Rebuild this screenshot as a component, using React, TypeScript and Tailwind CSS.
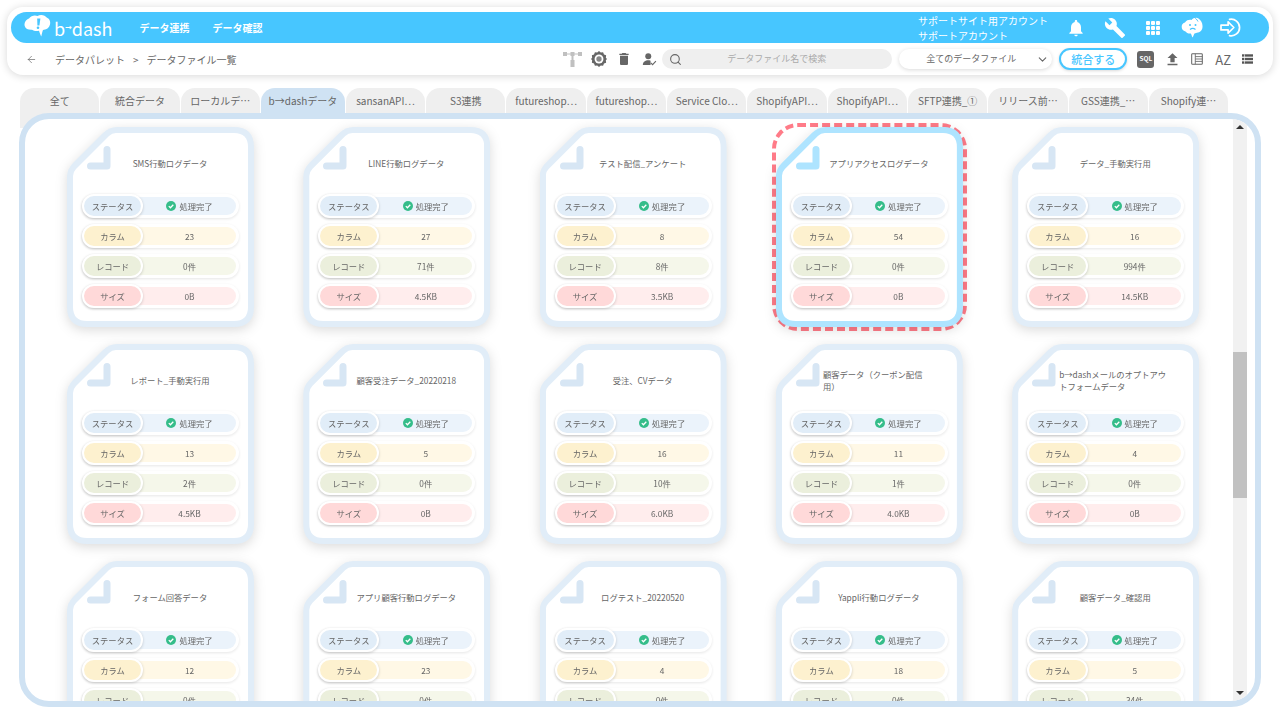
import React from 'react';
import { ArrowLeft, ChevronDown, Search } from 'lucide-react';
import { MdNotifications, MdBuild, MdDelete, MdFileUpload } from 'react-icons/md';
import { BsGrid3X3GapFill } from 'react-icons/bs';

const tabs = [
  '全て', '統合データ', 'ローカルデ⋯', 'b→dashデータ', 'sansanAPI⋯', 'S3連携', 'futureshop⋯', 'futureshop⋯',
  'Service Clo⋯', 'ShopifyAPI⋯', 'ShopifyAPI⋯', 'SFTP連携_①', 'リリース前⋯', 'GSS連携_⋯', 'Shopify連⋯',
];

const files = [
  { name: 'SMS行動ログデータ', columns: '23', records: '0件', size: '0B' },
  { name: 'LINE行動ログデータ', columns: '27', records: '71件', size: '4.5KB' },
  { name: 'テスト配信_アンケート', columns: '8', records: '8件', size: '3.5KB' },
  { name: 'アプリアクセスログデータ', columns: '54', records: '0件', size: '0B', selected: true },
  { name: 'データ_手動実行用', columns: '16', records: '994件', size: '14.5KB' },
  { name: 'レポート_手動実行用', columns: '13', records: '2件', size: '4.5KB' },
  { name: '顧客受注データ_20220218', columns: '5', records: '0件', size: '0B' },
  { name: '受注、CVデータ', columns: '16', records: '10件', size: '6.0KB' },
  { name: '顧客データ（クーポン配信用）', columns: '11', records: '1件', size: '4.0KB' },
  { name: 'b→dashメールのオプトアウトフォームデータ', columns: '4', records: '0件', size: '0B' },
  { name: 'フォーム回答データ', columns: '12', records: '0件', size: '0B' },
  { name: 'アプリ顧客行動ログデータ', columns: '23', records: '0件', size: '0B' },
  { name: 'ログテスト_20220520', columns: '4', records: '0件', size: '0B' },
  { name: 'Yappli行動ログデータ', columns: '18', records: '0件', size: '0B' },
  { name: '顧客データ_確認用', columns: '5', records: '34件', size: '0B' },
];

function LogoMark() {
  return (
    <svg width="27" height="27" viewBox="0 0 27 27">
      <path
        d="M5 4.500C7 1.500 11 .8 13.500 2c3-2 7.500-1.200 9.500 1.800 2.500 1 3.800 4 3 6.700-.6 3-3.200 5-6 5.300l-1 .3c-.5 1.200-1 3.400-1.700 6.400-.9-1.500-1.700-4-2.300-5.800-2.500.7-5.200.3-7-.9C4.500 16 1.500 15 .7 12 0 9 1.800 5.500 5 4.500Z"
        fill="#fff"
      />
      <path d="M13.200 4.500h3.200l-1 7h-2Z" fill="#47c6ff" />
      <circle cx="14" cy="13.800" r="1.300" fill="#47c6ff" />
    </svg>
  );
}

function FaceCloudIcon() {
  return (
    <svg width="22" height="24" viewBox="0 0 22 24">
      <path
        d="M4 6.500C5.500 4 8.500 3.500 10.500 4c1.500-2 5-3 7-1.500C20 4 21.500 7 21.500 10c.3 3-1.500 6-4.500 6.500-1.500.4-2.500.5-3.500 1-.6 1-1 2.500-2 4-.8-1.500-1-3-1.800-4-2.500.2-4.200-.6-5.200-2C2 15 .5 13 .7 10.500.8 8.500 2 7 4 6.500Z"
        fill="#fff"
      />
      <circle cx="9" cy="9" r="1" fill="#47c6ff" />
      <circle cx="14.500" cy="9" r="1" fill="#47c6ff" />
      <path d="M9 13.500c1.500-1.200 4-1.200 5.500 0" stroke="#47c6ff" strokeWidth="1.200" fill="none" />
      <path d="M13 1c1.500 1 3 2.500 4 4.500" stroke="#47c6ff" strokeWidth="1" fill="none" />
    </svg>
  );
}

function SignInIcon() {
  return (
    <svg width="21" height="19" viewBox="0 0 22 20" fill="none" stroke="#fff" strokeWidth="1.800">
      <path d="M1 7.500h7.500V4l6 6-6 6v-3.500H1Z" strokeLinejoin="round" />
      <path d="M10 1.500a8.700 8.700 0 1 1 0 17" strokeLinecap="round" />
    </svg>
  );
}

function NetworkIcon() {
  return (
    <svg width="19" height="18" viewBox="0 0 19 18" fill="#c0c0c0">
      <rect x="0" y="2" width="4" height="4" />
      <rect x="7.500" y="2" width="4" height="4" />
      <rect x="15" y="2" width="4" height="4" />
      <rect x="4" y="3.500" width="11" height="1" />
      <rect x="8.500" y="6" width="2" height="4" />
      <rect x="7.500" y="10" width="4" height="7" />
    </svg>
  );
}

function GearIcon() {
  return (
    <svg width="16" height="16" viewBox="0 0 18 18">
      <path d="M9 0l2 1.800 2.600-.5 1 2.500 2.400 1-.3 2.700L18 9l-1.300 1.500.3 2.700-2.400 1-1 2.500-2.600-.5L9 18l-2-1.800-2.600.5-1-2.500-2.400-1 .3-2.700L0 9l1.300-1.500L1 4.800l2.400-1 1-2.500 2.600.5Z" fill="#666" />
      <circle cx="9" cy="9" r="5" fill="#fff" />
      <circle cx="9" cy="9" r="3" fill="#888" />
    </svg>
  );
}

function UserCheckIcon() {
  return (
    <svg width="15" height="15" viewBox="0 0 18 18" fill="#666">
      <circle cx="7.500" cy="5" r="3.600" />
      <path d="M1 15.500c0-3.500 3-5.500 6.500-5.500 1 0 2 .2 2.800.5v5Z" />
      <path d="M10.500 13l2.200 2.200 4-4.200" stroke="#666" strokeWidth="1.300" fill="none" />
    </svg>
  );
}

function TableIcon() {
  return (
    <svg width="12" height="12" viewBox="0 0 14 14" fill="none" stroke="#666" strokeWidth="1.200">
      <rect x=".8" y=".8" width="12.400" height="12.400" rx="1" />
      <path d="M5 1v12M5 4.200h8M5 7h8M5 9.800h8" strokeWidth="1" />
    </svg>
  );
}

function ListIcon() {
  return (
    <svg width="11" height="10" viewBox="0 0 14 12" fill="#555">
      <rect x="0" y="0" width="14" height="3" />
      <rect x="0" y="4.500" width="14" height="3" />
      <rect x="0" y="9" width="14" height="3" />
      <rect x="3" y="0" width=".8" height="12" fill="#fff" />
    </svg>
  );
}

function CheckBadge() {
  return (
    <svg width="10" height="10" viewBox="0 0 10 10">
      <circle cx="5" cy="5" r="5" fill="#35bd8a" />
      <path d="M2.800 5.100l1.600 1.600 2.900-3" stroke="#fff" strokeWidth="1.300" fill="none" />
    </svg>
  );
}

function InfoRow({ label, labelBg, valueBg, children }: { label: string; labelBg: string; valueBg: string; children: React.ReactNode }) {
  return (
    <div className="flex h-[24px] rounded-full bg-white shadow-[0_1px_3px_rgba(0,0,0,0.1)]">
      <div className={`relative z-10 flex w-[61px] shrink-0 items-center justify-center rounded-full border-2 border-white shadow-[0_1px_3px_rgba(0,0,0,0.18)] ${labelBg}`}>
        {label}
      </div>
      <div className={`my-[3px] mr-[3px] -ml-[30px] flex flex-1 items-center justify-center gap-[3px] rounded-r-full pl-[30px] ${valueBg}`}>
        {children}
      </div>
    </div>
  );
}

function FileCard({ file }: { file: (typeof files)[number] }) {
  return (
    <div className="relative h-[200px] w-[187px]">
      {file.selected && (
        <div className="absolute -inset-[4px] rounded-[26px] border-[4px] border-dashed border-[#ff7b88]" />
      )}
      <div className="h-full drop-shadow-[0_3px_6px_rgba(0,0,0,0.14)]">
        <div
          className={`h-full p-[6px] [clip-path:path('M0_50Q0_42_6_36L36_6Q42_0_50_0L167_0Q187_0_187_20L187_180Q187_200_167_200L20_200Q0_200_0_180Z')] ${
            file.selected ? 'bg-[#aee4ff]' : 'bg-[#e1edf8]'
          }`}
        >
          <div className="relative h-full bg-white px-[9px] [clip-path:path('M0_43Q0_39_3_36L36_3Q39_0_43_0L161_0Q175_0_175_14L175_174Q175_188_161_188L14_188Q0_188_0_174Z')]">
            <svg className="absolute top-[13px] left-[14px]" width="24" height="24" viewBox="0 0 24 24">
              <path
                d="M20 3.500V20H3.500"
                stroke={file.selected ? '#aee4ff' : '#d7e6f4'}
                strokeWidth="7"
                strokeLinecap="round"
                strokeLinejoin="round"
                fill="none"
              />
            </svg>
            <div className="mb-[1px] flex h-[60px] justify-center pr-[13px] pl-[32px]">
              <p className="flex items-center text-[8.300px] leading-[12px] text-[#666]">{file.name}</p>
            </div>
            <div className="flex flex-col gap-[6px] text-[8.300px] text-[#666]">
              <InfoRow label="ステータス" labelBg="bg-[#e1edf8]" valueBg="bg-[#ebf3fb]">
                <CheckBadge />
                <span>処理完了</span>
              </InfoRow>
              <InfoRow label="カラム" labelBg="bg-[#fdf1cf]" valueBg="bg-[#fff8e6]">{file.columns}</InfoRow>
              <InfoRow label="レコード" labelBg="bg-[#ebefdc]" valueBg="bg-[#f5f7ea]">{file.records}</InfoRow>
              <InfoRow label="サイズ" labelBg="bg-[#ffd9d9]" valueBg="bg-[#ffeded]">{file.size}</InfoRow>
            </div>
          </div>
        </div>
      </div>
    </div>
  );
}

export default function App() {
  return (
    <div className="h-[720px] w-[1280px] overflow-hidden bg-white font-['Noto_Sans_CJK_JP','Noto_Sans',sans-serif] text-[#666]">
      {/* Header */}
      <div className="mx-[7px] mt-[7px] h-[68px] rounded-[16px] bg-white px-[4px] pt-[5px] shadow-[0_1px_8px_rgba(0,0,0,0.16)]">
        <div className="flex h-[31px] items-center rounded-full bg-[#47c6ff] pr-[28px] pl-[13px] text-white">
          <LogoMark />
          <div className="ml-[3px] flex items-center text-[18px] leading-none">
            <span>b</span>
            <span className="font-['DejaVu_Sans'] text-[8px] font-bold">→</span>
            <span>dash</span>
          </div>
          <nav className="ml-[27px] flex gap-[23px] text-[10px] font-bold">
            <span>データ連携</span>
            <span>データ確認</span>
          </nav>
          <div className="ml-auto text-[10px] leading-[15px]">
            <p>サポートサイト用アカウント</p>
            <p>サポートアカウント</p>
          </div>
          <div className="ml-[17px] flex items-center gap-[16.500px]">
            <span className="flex w-[22px] justify-center"><MdNotifications size={20} /></span>
            <span className="flex w-[22px] justify-center"><MdBuild size={22} /></span>
            <span className="flex w-[22px] justify-center"><BsGrid3X3GapFill size={16} /></span>
            <span className="flex w-[22px] justify-center"><FaceCloudIcon /></span>
            <span className="flex w-[22px] justify-center"><SignInIcon /></span>
          </div>
        </div>

        <div className="flex h-[32px] items-center pr-[16px] pl-[15px]">
          <ArrowLeft size={11} strokeWidth={1.500} />
          <div className="ml-[18px] flex gap-[8px] text-[10px]">
            <span>データパレット</span>
            <span>&gt;</span>
            <span>データファイル一覧</span>
          </div>

          <div className="ml-auto flex items-center">
            <NetworkIcon />
            <span className="ml-[9px]"><GearIcon /></span>
            <MdDelete size={16} className="ml-[8.500px]" color="#666" />
            <span className="ml-[10.500px]"><UserCheckIcon /></span>
          </div>
          <div className="ml-[5px] flex h-[20px] w-[230px] items-center rounded-full bg-[#efefef] pl-[7px]">
            <Search size={13} strokeWidth={2} className="text-[#666]" />
            <span className="ml-[45px] text-[9px] text-[#aaa]">データファイル名で検索</span>
          </div>
          <div className="ml-[7px] flex h-[20px] w-[153px] items-center rounded-full bg-white pr-[3px] pl-[27px] text-[9px] shadow-[0_1px_4px_rgba(0,0,0,0.15)]">
            <span>全てのデータファイル</span>
            <ChevronDown size={13} className="ml-auto" />
          </div>
          <div className="ml-[7px] flex h-[22px] w-[68px] items-center justify-center rounded-full border-2 border-[#47c6ff] bg-white text-[11px] font-medium text-[#47c6ff] shadow-[0_1px_3px_rgba(0,0,0,0.15)]">
            統合する
          </div>
          <div className="ml-[10px] flex h-[17px] w-[17px] items-center justify-center rounded-[3px] bg-[#666] text-[6.500px] font-bold text-white">
            SQL
          </div>
          <MdFileUpload size={17} className="ml-[9.500px]" color="#666" />
          <span className="ml-[10.500px]"><TableIcon /></span>
          <span className="ml-[12px] text-[13px] leading-none">AZ</span>
          <span className="ml-[11px]"><ListIcon /></span>
        </div>
      </div>

      {/* Tabs */}
      <div className="mt-[13px] ml-[20px] flex h-[40px] gap-[1px] text-[10px]">
        {tabs.map((tab, i) => (
          <div
            key={i}
            className={`flex h-full justify-center rounded-t-[14px] pt-[5px] whitespace-nowrap ${
              i === 3 ? 'w-[84px] bg-[#cfe2f3]' : 'w-[79.300px] bg-[#efefef]'
            }`}
          >
            {tab}
          </div>
        ))}
      </div>

      {/* File list panel */}
      <div className="relative z-10 mx-[19px] -mt-[15px] flex h-[594px] overflow-hidden rounded-[30px] border-[6px] border-[#cfe2f3] bg-white">
        <div className="min-w-0 flex-1 overflow-hidden">
          <div className="grid grid-cols-[repeat(5,187px)] gap-x-[49.300px] gap-y-[17px] pt-[8px] pl-[42px]">
            {files.map(file => (
              <FileCard key={file.name} file={file} />
            ))}
          </div>
        </div>
        {/* Scrollbar */}
        <div className="relative mr-[8px] flex w-[14px] shrink-0 flex-col items-center justify-between bg-[#f1f1f1] py-[6px]">
          <div className="h-0 w-0 border-x-[4px] border-b-[4px] border-x-transparent border-b-[#333]" />
          <div className="absolute top-[233px] h-[146px] w-full bg-[#c1c1c1]" />
          <div className="h-0 w-0 border-x-[4px] border-t-[4px] border-x-transparent border-t-[#333]" />
        </div>
      </div>
    </div>
  );
}
